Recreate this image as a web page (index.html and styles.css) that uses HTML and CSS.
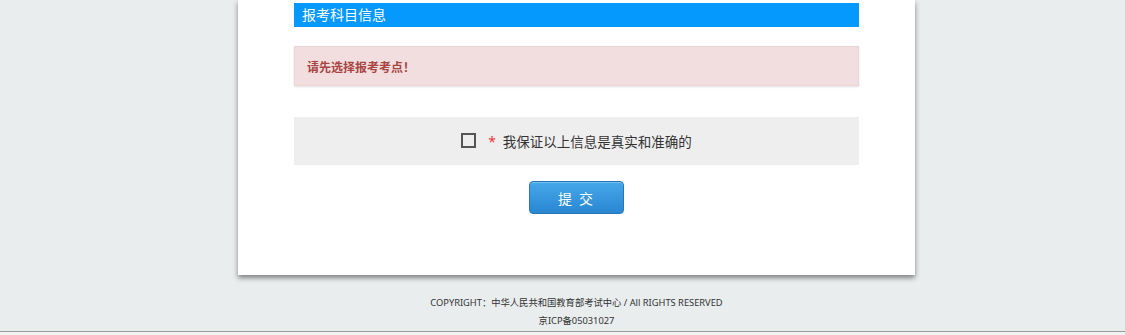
FILE: index.html
```html
<!DOCTYPE html>
<html lang="zh-CN">
<head>
    <meta charset="UTF-8">
    <title>报考科目信息</title>
    <link rel="stylesheet" href="styles.css">
</head>
<body>
    <div class="main">
        <div class="box">
            <div class="box-title">报考科目信息</div>
            <div class="alert">请先选择报考考点！</div>
            <div class="promise">
                <span class="check"></span>
                <span class="star">*</span>
                <span>我保证以上信息是真实和准确的</span>
            </div>
            <div class="actions">
                <button class="btn">提 交</button>
            </div>
        </div>
        <div class="footer">
            <p>COPYRIGHT：中华人民共和国教育部考试中心 / All RIGHTS RESERVED</p>
            <p>京ICP备05031027</p>
        </div>
    </div>
    <div class="bottom-line"></div>
</body>
</html>
```

FILE: styles.css
```css
body {
    margin: 0;
    background: #e9edee;
    font-family: "Noto Sans", "Noto Sans CJK SC", sans-serif;
    color: #333;
}
.main {
    width: 677px;
    margin-left: 238px;
}
.box {
    background: #fff;
    padding: 3px 56px 62px;
    box-shadow: 0 3px 5px rgba(0, 0, 0, 0.45);
    height: 210px;
}
.box-title {
    background: #0599fd;
    color: #fff;
    height: 24px;
    line-height: 23px;
    padding-left: 8px;
    font-size: 14px;
}
.alert {
    margin-top: 19px;
    height: 38px;
    line-height: 40px;
    padding-left: 12px;
    background: #f2dede;
    border: 1px solid #ebd5d8;
    box-shadow: 0 1px 2px rgba(0, 0, 0, 0.12);
    color: #a94442;
    font-family: "Noto Sans CJK SC", sans-serif;
    font-size: 12px;
    font-weight: bold;
}
.promise {
    margin-top: 31px;
    height: 48px;
    background: #eeeeee;
    display: flex;
    align-items: center;
    justify-content: center;
    font-size: 13.5px;
    color: #333;
}
.check {
    width: 11px;
    height: 11px;
    border: 2px solid #555;
    margin-right: 12px;
    margin-top: -2px;
}
.star {
    color: #e4393c;
    margin-right: 7px;
    font-size: 14px;
}
.actions {
    display: flex;
    justify-content: center;
    margin-top: 16px;
}
.btn {
    width: 95px;
    height: 33px;
    border: 1px solid #2a76b4;
    border-radius: 4px;
    background: linear-gradient(#45a8e8, #2a86d2);
    color: #fff;
    font-family: "Noto Sans CJK SC", sans-serif;
    font-size: 14px;
    letter-spacing: 2px;
    box-shadow: inset 0 1px 0 rgba(255, 255, 255, 0.25);
}
.footer {
    margin-top: 19px;
    text-align: center;
    font-size: 9.3px;
    line-height: 18px;
}
.footer p {
    margin: 0;
}
.bottom-line {
    margin-top: 1px;
    border-top: 1px solid #9a9a9a;
    background: #f4f4f4;
    height: 4px;
}
```
